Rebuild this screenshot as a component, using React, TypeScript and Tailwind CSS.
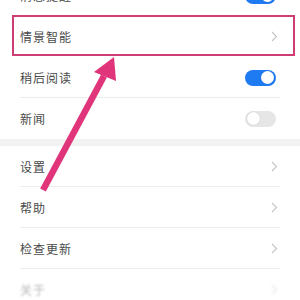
import type { ReactNode } from "react";

const font = { fontFamily: '"Noto Sans CJK SC", "Noto Sans", sans-serif' };

function Toggle({ on }: { on: boolean }) {
  return (
    <div
      className={`flex h-[16px] w-[31px] items-center rounded-full p-[2px] ${
        on ? "justify-end bg-[#1f7bf2]" : "justify-start bg-[#e6e6e6]"
      }`}
    >
      <div className="h-[13px] w-[13px] rounded-full bg-white shadow-[0_0_1px_rgba(0,0,0,0.25)]" />
    </div>
  );
}

function Chevron() {
  return (
    <svg width="7" height="11" viewBox="0 0 7 11" fill="none" className="mr-[-2px]">
      <path d="M1 1l4.5 4.5L1 10" stroke="#c4c4c4" strokeWidth="1.1" />
    </svg>
  );
}

function Row({ label, right, divider = true }: { label: string; right: ReactNode; divider?: boolean }) {
  return (
    <div className="relative flex h-[41px] items-center justify-between pl-[20px] pr-[24px]">
      <span className="text-[12px] tracking-[1px] text-[#4a4a4a]">{label}</span>
      {right}
      {divider ? <div className="absolute bottom-0 left-[20px] right-[20px] h-px bg-[#ececec]" /> : null}
    </div>
  );
}

export default function App() {
  return (
    <div className="relative h-[300px] w-[300px] overflow-hidden bg-white" style={font}>
      <div className="-mt-[25px]">
        <Row label="消息提醒" right={<Toggle on />} divider={false} />
        <div className="relative">
          <Row label="情景智能" right={<Chevron />} divider={false} />
          <div className="absolute -top-[1px] bottom-[1px] left-[12px] right-[5px] border-2 border-[#cf3d75]" />
        </div>
        <Row label="稍后阅读" right={<Toggle on />} />
        <Row label="新闻" right={<Toggle on={false} />} divider={false} />
        <div className="h-[7px] bg-[#f2f2f2]" />
        <Row label="设置" right={<Chevron />} />
        <Row label="帮助" right={<Chevron />} />
        <Row label="检查更新" right={<Chevron />} />
        <div className="opacity-40 blur-[1px]">
          <Row label="关于" right={<Chevron />} divider={false} />
        </div>
      </div>

      <svg className="pointer-events-none absolute left-0 top-0" width="300" height="300" viewBox="0 0 300 300">
        <line x1="43" y1="190" x2="104" y2="76" stroke="#e0357a" strokeWidth="6.5" />
        <polygon points="114,57 94,72 116,81" fill="#e0357a" />
      </svg>
    </div>
  );
}
